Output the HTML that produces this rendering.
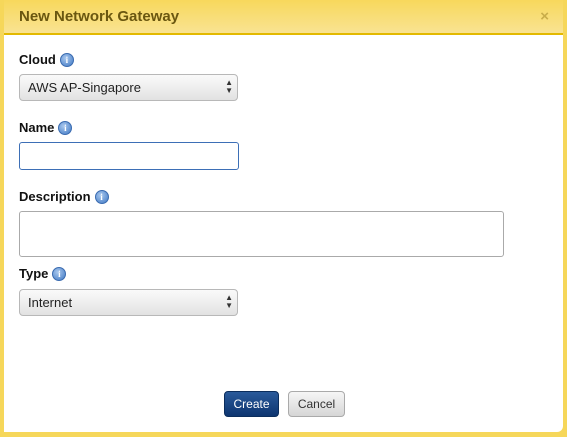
<!DOCTYPE html>
<html><head><style>
body{margin:0;width:567px;height:437px;overflow:hidden;background:#f6d75a;font-family:"Liberation Sans",sans-serif;position:relative}
.hd{position:absolute;left:4px;top:0;width:559px;height:33px;background:linear-gradient(#f8d85c,#f9e392);border-bottom:2px solid #e3b900}
.hd b{position:absolute;left:15px;top:8px;font-size:15px;color:#6a5710}
.x{position:absolute;right:14px;top:8px;font-size:15px;color:#c9ad4a;font-weight:bold}
.bd{position:absolute;left:4px;top:35px;width:559px;height:397px;background:#fff;border-radius:0 0 6px 0}
.l{position:absolute;left:19px;font-size:13px;font-weight:bold;color:#111}
.i{display:inline-block;width:12px;height:12px;border-radius:50%;background:radial-gradient(circle at 40% 35%,#a9c8ee,#3f78c4);border:1px solid #3a6bb0;color:#fff;font-size:9px;text-align:center;line-height:12px;font-weight:bold;vertical-align:1px;margin-left:4px;font-family:"Liberation Serif",serif}
.s{position:absolute;left:19px;width:219px;height:27px;border:1px solid #b8b8b8;border-radius:4px;background:linear-gradient(#fafafa,#e2e2e2);font-size:13px;color:#222;box-sizing:border-box;padding:5px 0 0 8px}
.s span{position:absolute;right:4px;top:4px;font-size:8px;line-height:8px;color:#333}
.t{position:absolute;left:19px;border:1px solid #aaa;border-radius:3px;box-sizing:border-box}
.btn{position:absolute;top:391px;height:26px;border-radius:4px;box-sizing:border-box;font-size:12px;text-align:center;line-height:24px}
</style></head><body>
<div class="hd"><b>New Network Gateway</b><span class="x">×</span></div>
<div class="bd"></div>
<div class="l" style="top:52px">Cloud<span class="i">i</span></div>
<div class="s" style="top:74px">AWS AP-Singapore<span>▲<br>▼</span></div>
<div class="l" style="top:120px">Name<span class="i">i</span></div>
<div class="t" style="top:142px;width:220px;height:28px;border-color:#3d6fb6"></div>
<div class="l" style="top:189px">Description<span class="i">i</span></div>
<div class="t" style="top:211px;width:485px;height:46px"></div>
<div class="l" style="top:266px">Type<span class="i">i</span></div>
<div class="s" style="top:289px">Internet<span>▲<br>▼</span></div>
<div class="btn" style="left:224px;width:55px;background:linear-gradient(#2a5a9a,#0d3570);color:#fff;border:1px solid #0b2d5c">Create</div>
<div class="btn" style="left:288px;width:57px;background:linear-gradient(#f6f6f6,#d6d6d6);color:#333;border:1px solid #aaa">Cancel</div>
</body></html>
